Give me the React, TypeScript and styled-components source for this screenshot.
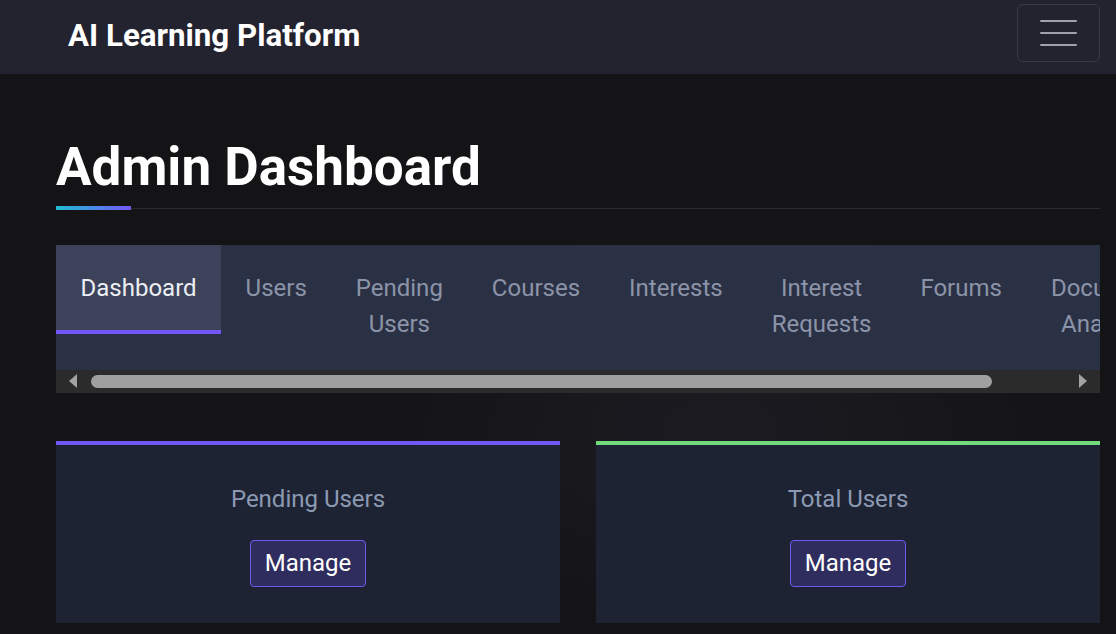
import React from "react";
import styled, { createGlobalStyle } from "styled-components";

const GlobalStyle = createGlobalStyle`
  html, body {
    margin: 0;
    padding: 0;
    background: #141417;
  }
  body {
    font-family: Roboto, "Noto Sans", "Liberation Sans", sans-serif;
    color: #e9eaf0;
    overflow: hidden;
  }
  * { box-sizing: border-box; }
`;

const Page = styled.div`
  min-height: 634px;
  background:
    radial-gradient(ellipse 520px 300px at 720px 430px, rgba(40, 40, 52, 0.35), transparent 70%),
    #141417;
`;

const NavBar = styled.header`
  height: 74px;
  background: #23222f;
  display: flex;
  align-items: center;
  justify-content: space-between;
  padding: 0 16px 8px 68px;
`;

const Brand = styled.div`
  font-size: 31.3px;
  font-weight: 700;
  color: #ffffff;
  line-height: 1.2;
  padding-top: 6px;
`;

const Burger = styled.button`
  width: 83px;
  height: 58px;
  border: 1px solid #3a3948;
  border-radius: 6px;
  background: transparent;
  display: flex;
  flex-direction: column;
  align-items: center;
  justify-content: center;
  gap: 10px;
  padding: 0;
`;

const BurgerLine = styled.span`
  display: block;
  width: 37px;
  height: 2px;
  border-radius: 1px;
  background: #a2a1a9;
`;

const Main = styled.main`
  padding: 62px 16px 0 56px;
`;

const Title = styled.h1`
  position: relative;
  margin: 0;
  font-size: 53px;
  font-weight: 700;
  line-height: 63.6px;
  color: #ffffff;
  padding-bottom: 8px;
  border-bottom: 1px solid #2a2a2f;

  &::after {
    content: "";
    position: absolute;
    left: 0;
    bottom: -2px;
    width: 75px;
    height: 4px;
    background: linear-gradient(90deg, #20bdd4, #7357f6);
  }
`;

const TabsBox = styled.nav`
  margin-top: 36px;
  background: #2b3145;
`;

const TabStrip = styled.div`
  display: flex;
  align-items: flex-start;
  overflow: hidden;
`;

const Tab = styled.div<{ $active?: boolean }>`
  flex: none;
  padding: 25px 24.5px 24px;
  font-size: 24px;
  line-height: 36px;
  text-align: center;
  white-space: nowrap;
  color: ${(p) => (p.$active ? "#eceef4" : "#8b94a8")};
  background: ${(p) => (p.$active ? "#3b4259" : "transparent")};
  border-bottom: 4px solid ${(p) => (p.$active ? "#7357f6" : "transparent")};
`;

const ScrollTrack = styled.div`
  height: 23px;
  background: #2b2b2b;
  display: flex;
  align-items: center;
  padding: 0 13px;
`;

const Arrow = styled.span<{ $dir: "left" | "right" }>`
  flex: none;
  width: 0;
  height: 0;
  border-top: 7.5px solid transparent;
  border-bottom: 7.5px solid transparent;
  ${(p) =>
    p.$dir === "left"
      ? "border-right: 8px solid #a3a3a3;"
      : "border-left: 8px solid #a3a3a3; margin-left: auto;"}
`;

const Thumb = styled.span`
  flex: none;
  height: 13px;
  margin-left: 14px;
  border-radius: 7px;
  background: #a0a0a0;
`;

const Cards = styled.section`
  margin-top: 48px;
  display: grid;
  grid-template-columns: 1fr 1fr;
  gap: 36px;
`;

const Card = styled.div<{ $accent: string }>`
  background: #1e2334;
  border-top: 4px solid ${(p) => p.$accent};
  padding: 37px 24px 36px;
  display: flex;
  flex-direction: column;
  align-items: center;
`;

const CardTitle = styled.h3`
  margin: 0 0 24px;
  font-size: 24px;
  font-weight: 400;
  line-height: 34px;
  color: #8c9ab3;
`;

const ManageButton = styled.button`
  font-family: inherit;
  font-size: 24px;
  line-height: 35px;
  color: #ffffff;
  background: #2e2d5e;
  border: 1px solid #6f5af0;
  border-radius: 4px;
  padding: 5px 14px;
`;

const tabs: { lines: string[]; active?: boolean }[] = [
  { lines: ["Dashboard"], active: true },
  { lines: ["Users"] },
  { lines: ["Pending", "Users"] },
  { lines: ["Courses"] },
  { lines: ["Interests"] },
  { lines: ["Interest", "Requests"] },
  { lines: ["Forums"] },
  { lines: ["Document", "Analysis"] },
];

const cards = [
  { title: "Pending Users", accent: "#7357f6" },
  { title: "Total Users", accent: "#6fdb7d" },
];

export default function App() {
  return (
    <>
      <GlobalStyle />
      <Page>
        <NavBar>
          <Brand>AI Learning Platform</Brand>
          <Burger aria-label="Toggle navigation">
            <BurgerLine />
            <BurgerLine />
            <BurgerLine />
          </Burger>
        </NavBar>
        <Main>
          <Title>Admin Dashboard</Title>
          <TabsBox>
            <TabStrip>
              {tabs.map((t) => (
                <Tab key={t.lines.join(" ")} $active={t.active}>
                  {t.lines.map((l, i) => (
                    <React.Fragment key={l}>
                      {i > 0 && <br />}
                      {l}
                    </React.Fragment>
                  ))}
                </Tab>
              ))}
            </TabStrip>
            <ScrollTrack>
              <Arrow $dir="left" />
              <Thumb style={{ width: 901 }} />
              <Arrow $dir="right" />
            </ScrollTrack>
          </TabsBox>
          <Cards>
            {cards.map((c) => (
              <Card key={c.title} $accent={c.accent}>
                <CardTitle>{c.title}</CardTitle>
                <ManageButton>Manage</ManageButton>
              </Card>
            ))}
          </Cards>
        </Main>
      </Page>
    </>
  );
}
